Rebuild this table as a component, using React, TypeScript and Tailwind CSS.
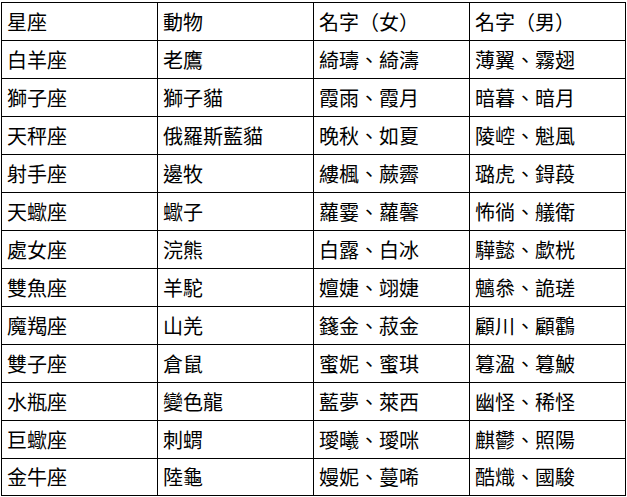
import React from "react";

const rows: string[][] = [
  ["星座", "動物", "名字（女）", "名字（男）"],
  ["白羊座", "老鷹", "綺璹、綺濤", "薄翼、霧翅"],
  ["獅子座", "獅子貓", "霞雨、霞月", "暗暮、暗月"],
  ["天秤座", "俄羅斯藍貓", "晚秋、如夏", "陵崆、魁風"],
  ["射手座", "邊牧", "縷楓、蕨霽", "璐虎、鍀葮"],
  ["天蠍座", "蠍子", "蘿霎、蘿馨", "怖徜、艤衛"],
  ["處女座", "浣熊", "白露、白冰", "驊懿、歔桄"],
  ["雙魚座", "羊駝", "嬗婕、翊婕", "魑叅、詭瑳"],
  ["魔羯座", "山羌", "籛金、菽金", "顧川、顧鸖"],
  ["雙子座", "倉鼠", "蜜妮、蜜琪", "篹溋、篹鮍"],
  ["水瓶座", "變色龍", "藍夢、萊西", "幽怪、稀怪"],
  ["巨蠍座", "刺蝟", "璦曦、璦咪", "麒鬱、照陽"],
  ["金牛座", "陸龜", "嫚妮、蔓唏", "酷熾、國駿"],
];

export default function App() {
  return (
    <div className="w-[627px] h-[497px] bg-white pt-[2px] pl-[1px]">
      <div
        className="grid grid-cols-[repeat(4,156px)] border-l border-t border-black text-black text-[20px] leading-none"
        style={{ fontFamily: '"Noto Sans CJK TC", "Noto Sans", sans-serif', width: 625 }}
      >
        {rows.map((r, i) =>
          r.map((c, j) => (
            <div
              key={`${i}-${j}`}
              className={`${i === rows.length - 1 ? "h-[37px]" : "h-[38px]"} border-r border-b border-black flex items-center pl-[5px] whitespace-nowrap`}
            >
              {c}
            </div>
          ))
        )}
      </div>
    </div>
  );
}
